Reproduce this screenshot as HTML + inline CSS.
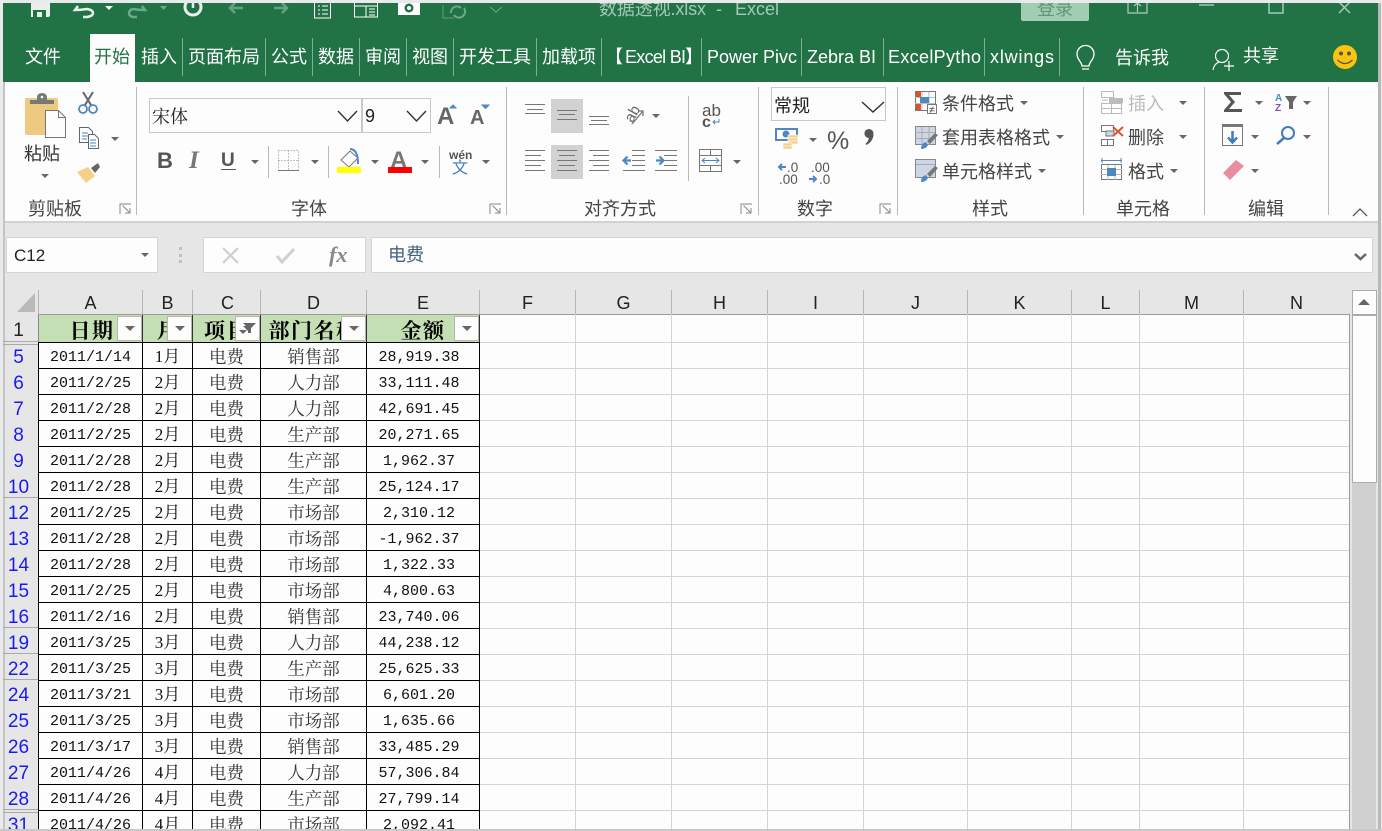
<!DOCTYPE html>
<html lang="zh"><head><meta charset="utf-8"><title>数据透视.xlsx - Excel</title>
<style>
html,body{margin:0;padding:0;width:1382px;height:831px;overflow:hidden;background:#e8eaec}
body{position:relative;font-family:"Liberation Sans","Noto Sans CJK SC",sans-serif}
.a{position:absolute}
#bg{left:3px;top:3px;width:1375px;height:826px;background:#e6e6e6;overflow:hidden}
#green{left:3px;top:3px;width:1375px;height:79px;background:#217346}
#ribbon{left:5px;top:82px;width:1373px;height:139px;background:#fdfdfd;border-bottom:2px solid #d2d2d2}
#cells{left:38px;top:315px;width:1311px;height:514px;background:#fdfdfd}
#lines{left:480px;top:342px;width:869px;height:487px;background-image:repeating-linear-gradient(to bottom,#d4d4d4 0,#d4d4d4 1px,transparent 1px,transparent 26px)}
.v{position:absolute;top:290px;width:1px;height:539px;background:#d4d4d4}
.hs{position:absolute;top:290px;width:1px;height:24px;background:#b4b4b4}
table{position:absolute;left:38px;top:342px;border-collapse:collapse;table-layout:fixed;width:442px;font-family:"Liberation Mono","Noto Serif CJK SC",serif;font-size:15px;color:#111}
td{border:1px solid #000;height:21px;padding:4px 0 0;text-align:center;line-height:21px;white-space:nowrap;overflow:hidden}
td.c{font-family:"Noto Serif CJK SC",serif;font-size:17.5px;color:#333;height:23px;line-height:23px;padding-top:2px}
td.m{font-family:"Liberation Serif","Noto Serif CJK SC",serif;font-size:17px;height:23px;line-height:23px;padding-top:2px}
td.e{padding-right:8px}
#hdr{left:38px;top:315px;width:442px;height:27px;background:#c4dfb3;overflow:hidden}
.hc{position:absolute;top:0;height:27px;text-align:center;font:bold 21px/32px "Liberation Serif","Noto Serif CJK SC",serif;letter-spacing:1.5px;color:#000;white-space:nowrap;overflow:hidden}
.fb{position:absolute;top:1px;width:23px;height:23px;background:#fdfdfd;border:1px solid #b5b5b5}
.fb:after{content:"";position:absolute;left:7px;top:9px;border:5px solid transparent;border-top:5px solid #666;border-bottom:0}
.ch{position:absolute;top:290px;height:24px;font-size:18px;line-height:27px;text-align:center;color:#222}
.rh{position:absolute;left:1px;width:35px;text-align:center;font-size:19px;height:26px;line-height:30px;color:#1a1af0}
.dl{position:absolute;left:3px;width:35px;height:1px;background:#aaa}
</style></head>
<body>
<div class="a" id="bg"></div>
<div class="a" id="green"></div>
<div class="a" id="ribbon"></div>
<div class="a" style="left:3px;top:82px;width:2px;height:747px;background:#c4c4c4"></div>
<div class="a" style="left:1378px;top:3px;width:3px;height:826px;background:#b8b8b8"></div>
<div class="a" style="left:3px;top:829px;width:1378px;height:2px;background:#c4c4c4"></div>

<!-- formula bar -->
<div class="a" style="left:6px;top:237px;width:150px;height:34px;background:#fdfdfd;border:1px solid #d4d4d4"></div>
<div class="a" style="left:203px;top:237px;width:161px;height:34px;background:#fdfdfd;border:1px solid #d4d4d4"></div>
<div class="a" style="left:371px;top:237px;width:1000px;height:34px;background:#fdfdfd;border:1px solid #d4d4d4"></div>

<!-- sheet -->
<div class="a" id="cells"></div>
<div class="a" id="lines"></div>
<div class="a" style="left:38px;top:314px;width:1312px;height:1px;background:#9b9b9b"></div>
<div class="a" style="left:1349px;top:314px;width:1px;height:515px;background:#9b9b9b"></div>
<i class="v" style="left:575px"></i><i class="v" style="left:671px"></i><i class="v" style="left:767px"></i><i class="v" style="left:863px"></i><i class="v" style="left:967px"></i><i class="v" style="left:1071px"></i><i class="v" style="left:1139px"></i><i class="v" style="left:1243px"></i>
<i class="hs" style="left:38px"></i><i class="hs" style="left:142px"></i><i class="hs" style="left:192px"></i><i class="hs" style="left:260px"></i><i class="hs" style="left:366px"></i><i class="hs" style="left:479px"></i><i class="hs" style="left:575px"></i><i class="hs" style="left:671px"></i><i class="hs" style="left:767px"></i><i class="hs" style="left:863px"></i><i class="hs" style="left:967px"></i><i class="hs" style="left:1071px"></i><i class="hs" style="left:1139px"></i><i class="hs" style="left:1243px"></i>
<div class="ch" style="left:39px;width:103px">A</div><div class="ch" style="left:143px;width:49px">B</div><div class="ch" style="left:194px;width:67px">C</div><div class="ch" style="left:261px;width:105px">D</div><div class="ch" style="left:367px;width:112px">E</div><div class="ch" style="left:480px;width:95px">F</div><div class="ch" style="left:576px;width:95px">G</div><div class="ch" style="left:672px;width:95px">H</div><div class="ch" style="left:768px;width:95px">I</div><div class="ch" style="left:864px;width:103px">J</div><div class="ch" style="left:968px;width:103px">K</div><div class="ch" style="left:1072px;width:67px">L</div><div class="ch" style="left:1140px;width:103px">M</div><div class="ch" style="left:1244px;width:105px">N</div>

<div class="a" id="hdr">
<div class="hc" style="left:2px;width:104px">日期</div>
<div class="hc" style="left:105px;width:49px">月</div>
<div class="hc" style="left:155px;width:67px">项目</div>
<div class="hc" style="left:223px;width:105px">部门名称</div>
<div class="hc" style="left:329px;width:112px">金额</div>
<div class="fb" style="left:79px"></div><div class="fb" style="left:129px"></div><div class="fb" style="left:197px"></div><div class="fb" style="left:303px"></div><div class="fb" style="left:416px"></div>
<svg class="a" style="left:201px;top:8px" width="18" height="12"><path d="M4 0h13l-5 5v5h-3v-5z" fill="#666"/><path d="M0 7h8l-4 4z" fill="#666"/></svg>
</div>
<div class="a" style="left:38px;top:315px;width:1px;height:27px;background:#888"></div>
<div class="a" style="left:142px;top:315px;width:1px;height:27px;background:#333"></div><div class="a" style="left:192px;top:315px;width:1px;height:27px;background:#333"></div><div class="a" style="left:260px;top:315px;width:1px;height:27px;background:#333"></div><div class="a" style="left:366px;top:315px;width:1px;height:27px;background:#333"></div><div class="a" style="left:479px;top:315px;width:1px;height:27px;background:#333"></div>

<table><colgroup><col style="width:104px"><col style="width:50px"><col style="width:68px"><col style="width:106px"><col style="width:113px"></colgroup>
<tr><td>2011/1/14</td><td class="m">1月</td><td class="c">电费</td><td class="c">销售部</td><td class="e">28,919.38</td></tr>
<tr><td>2011/2/25</td><td class="m">2月</td><td class="c">电费</td><td class="c">人力部</td><td class="e">33,111.48</td></tr>
<tr><td>2011/2/28</td><td class="m">2月</td><td class="c">电费</td><td class="c">人力部</td><td class="e">42,691.45</td></tr>
<tr><td>2011/2/25</td><td class="m">2月</td><td class="c">电费</td><td class="c">生产部</td><td class="e">20,271.65</td></tr>
<tr><td>2011/2/28</td><td class="m">2月</td><td class="c">电费</td><td class="c">生产部</td><td class="e">1,962.37</td></tr>
<tr><td>2011/2/28</td><td class="m">2月</td><td class="c">电费</td><td class="c">生产部</td><td class="e">25,124.17</td></tr>
<tr><td>2011/2/25</td><td class="m">2月</td><td class="c">电费</td><td class="c">市场部</td><td class="e">2,310.12</td></tr>
<tr><td>2011/2/28</td><td class="m">2月</td><td class="c">电费</td><td class="c">市场部</td><td class="e">-1,962.37</td></tr>
<tr><td>2011/2/28</td><td class="m">2月</td><td class="c">电费</td><td class="c">市场部</td><td class="e">1,322.33</td></tr>
<tr><td>2011/2/25</td><td class="m">2月</td><td class="c">电费</td><td class="c">市场部</td><td class="e">4,800.63</td></tr>
<tr><td>2011/2/16</td><td class="m">2月</td><td class="c">电费</td><td class="c">销售部</td><td class="e">23,740.06</td></tr>
<tr><td>2011/3/25</td><td class="m">3月</td><td class="c">电费</td><td class="c">人力部</td><td class="e">44,238.12</td></tr>
<tr><td>2011/3/25</td><td class="m">3月</td><td class="c">电费</td><td class="c">生产部</td><td class="e">25,625.33</td></tr>
<tr><td>2011/3/21</td><td class="m">3月</td><td class="c">电费</td><td class="c">市场部</td><td class="e">6,601.20</td></tr>
<tr><td>2011/3/25</td><td class="m">3月</td><td class="c">电费</td><td class="c">市场部</td><td class="e">1,635.66</td></tr>
<tr><td>2011/3/17</td><td class="m">3月</td><td class="c">电费</td><td class="c">销售部</td><td class="e">33,485.29</td></tr>
<tr><td>2011/4/26</td><td class="m">4月</td><td class="c">电费</td><td class="c">人力部</td><td class="e">57,306.84</td></tr>
<tr><td>2011/4/26</td><td class="m">4月</td><td class="c">电费</td><td class="c">生产部</td><td class="e">27,799.14</td></tr>
<tr><td>2011/4/26</td><td class="m">4月</td><td class="c">电费</td><td class="c">市场部</td><td class="e">2,092.41</td></tr>
</table>

<div class="a" style="left:0;top:829px;width:1382px;height:2px;background:#c8c8c8"></div>

<!-- row headers -->
<div class="rh" style="top:316px;color:#222">1</div>
<div class="rh" style="top:343px">5</div><div class="rh" style="top:369px">6</div><div class="rh" style="top:395px">7</div><div class="rh" style="top:421px">8</div><div class="rh" style="top:447px">9</div><div class="rh" style="top:473px">10</div><div class="rh" style="top:499px">12</div><div class="rh" style="top:525px">13</div><div class="rh" style="top:551px">14</div><div class="rh" style="top:577px">15</div><div class="rh" style="top:603px">16</div><div class="rh" style="top:629px">19</div><div class="rh" style="top:655px">22</div><div class="rh" style="top:681px">24</div><div class="rh" style="top:707px">25</div><div class="rh" style="top:733px">26</div><div class="rh" style="top:759px">27</div><div class="rh" style="top:785px">28</div><div class="rh" style="top:811px;height:18px;overflow:hidden">31</div>
<i class="dl" style="top:341px"></i><i class="dl" style="top:344px"></i><i class="dl" style="top:497px"></i><i class="dl" style="top:627px"></i><i class="dl" style="top:653px"></i><i class="dl" style="top:679px"></i><i class="dl" style="top:809px"></i><i class="dl" style="top:812px"></i>

<!-- scrollbar -->
<div class="a" style="left:1352px;top:315px;width:24px;height:514px;background:#cfd0cf"></div>
<div class="a" style="left:1352px;top:290px;width:23px;height:23px;background:#fdfdfd;border:1px solid #ababab"></div>
<div class="a" style="left:1352px;top:315px;width:23px;height:166px;background:#fdfdfd;border:1px solid #ababab"></div>
<svg class="a" style="left:1358px;top:298px" width="12" height="8"><path d="M0 7L6 1l6 6z" fill="#666"/></svg>

<!-- overlay: title bar, ribbon tabs, ribbon commands -->
<svg class="a" style="left:0;top:0" width="1382" height="316" viewBox="0 0 1382 316">
<defs><path id="d" d="M0 0h8l-4 4z" fill="#666"/><path id="dw" d="M0 0h8l-4 4z" fill="#fff"/></defs>
<style>
text{font-family:"Liberation Sans","Noto Sans CJK SC",sans-serif;font-size:18px}
.tb{fill:#fff}.r{fill:#444}
.l{stroke:#777;stroke-width:1;fill:none}
</style>
<!-- quick access (clipped at window top) -->
<clipPath id="top"><rect x="3" y="3" width="1375" height="40"/></clipPath>
<g clip-path="url(#top)">
<path d="M31 0h19v15q0 2-2 2h-2v-7h-13v7h-2z" fill="#e8f0ec"/><rect x="37" y="12" width="5" height="5" fill="#e8f0ec"/>
<path d="M78 6l-3 4q6 0 12-1 6 1 6 4t-6 4h-4" fill="none" stroke="#e8f0ec" stroke-width="2.500"/>
<use href="#dw" x="105" y="6"/>
<path d="M142 6l3 4q-6 0-12-1-4 1-4 4t4 4h4" fill="none" stroke="#6ea88a" stroke-width="2.500"/>
<path d="M160 6h7l-3.500 4z" fill="#6ea88a"/>
<circle cx="193" cy="7" r="8" fill="none" stroke="#e8f0ec" stroke-width="3"/><path d="M193 0v8" stroke="#e8f0ec" stroke-width="2.500"/>
<path d="M243 8h-13M235 3l-5 5 5 5" fill="none" stroke="#62a183" stroke-width="2.500"/>
<path d="M274 8h13M282 3l5 5-5 5" fill="none" stroke="#62a183" stroke-width="2.500"/>
<rect x="314.500" y="0" width="16" height="18" fill="none" stroke="#fff"/><path d="M318 6h2M322 6h6M318 10h2M322 10h6M318 14h2M322 14h6" stroke="#fff"/>
<rect x="354.500" y="0" width="23" height="17" fill="none" stroke="#fff"/><path d="M355 6h22M366 6v11M369 9h6M369 12h6M369 15h6" stroke="#fff"/>
<path d="M398 0h22v15h-22z" fill="#fff"/><circle cx="409" cy="8" r="4.500" fill="#217346"/><circle cx="409" cy="8" r="2" fill="#fff"/>
<path d="M443 5v13h11" fill="none" stroke="#5f9c7e"/><path d="M451 13a6 6 0 0 1 10-5M464 8a6 6 0 0 1-10 7" fill="none" stroke="#6ea88a" stroke-width="2"/>
<path d="M490 7l6 5 6-5" fill="none" stroke="#6ea88a"/>
<text x="599" y="15" fill="#a4c9b6" textLength="107">数据透视.xlsx</text><text x="716" y="15" fill="#a4c9b6">-</text><text x="735" y="15" fill="#a4c9b6">Excel</text>
<rect x="1021" y="0" width="68" height="21" rx="2" fill="#a1cdb3"/><text x="1037" y="15" fill="#5f9478">登录</text>
<path d="M1128 0v13h19v-13M1137.500 12v-9M1134 6l3.500-3 3.500 3" fill="none" stroke="#aecdbb" stroke-width="1.200"/>
<path d="M1199 5h15" stroke="#a4c9b6" stroke-width="1.500"/>
<rect x="1269" y="0" width="14" height="13" fill="none" stroke="#a4c9b6" stroke-width="1.500"/>
<path d="M1339 2l11 11M1350 2l-11 11" stroke="#a4c9b6" stroke-width="1.500"/>
</g>

<!-- tabs -->
<rect x="90" y="34" width="45" height="48" fill="#fdfdfd"/>
<g stroke="#7fb095"><path d="M182.500 38v38M265.500 38v38M312.500 38v38M359.500 38v38M406.500 38v38M453.500 38v38M536.500 38v38M601.500 38v38M701.500 38v38M801.500 38v38M883.500 38v38M984.500 38v38M1059.500 38v38"/></g>
<g class="tb">
<text x="25" y="63">文件</text><text x="141" y="63">插入</text><text x="188" y="63">页面布局</text><text x="271" y="63">公式</text><text x="318" y="63">数据</text><text x="365" y="63">审阅</text><text x="412" y="63">视图</text><text x="459" y="63">开发工具</text><text x="542" y="63">加载项</text>
<text x="605" y="63">【</text><text x="625" y="63" textLength="61">Excel BI</text><text x="685" y="63">】</text><text x="707" y="63">Power Pivc</text><text x="807" y="63">Zebra BI</text><text x="888" y="63" textLength="93">ExcelPytho</text><text x="990" y="63" textLength="64">xlwings</text>
<text x="1115" y="64">告诉我</text><text x="1243" y="62">共享</text>
</g>
<text x="94" y="63" fill="#217346">开始</text>
<!-- tell me bulb -->
<path d="M1082 66c0-4-5-6-5-12a8.500 8.500 0 0 1 17 0c0 6-5 8-5 12zM1082 69h7" fill="none" stroke="#fff" stroke-width="1.300"/>
<!-- share person -->
<circle cx="1222" cy="56" r="6.500" fill="none" stroke="#fff" stroke-width="1.200"/><path d="M1213 70q1-6 6-8M1224 66h10M1229 61v10" fill="none" stroke="#fff" stroke-width="1.200"/>
<!-- smiley -->
<circle cx="1345" cy="57" r="12" fill="#fcc30f"/><circle cx="1341" cy="53.500" r="2" fill="#555"/><circle cx="1349" cy="53.500" r="2" fill="#555"/><path d="M1337.500 60q7.500 7 15 0" fill="none" stroke="#555" stroke-width="1.300"/>

<!-- group separators -->
<g stroke="#b9b9b9"><path d="M136.500 87v128M506.500 87v128M758.500 87v128M897.500 87v128M1083.500 87v128M1204.500 87v128M1328.500 87v128M268.500 146v32M328.500 146v32M439.500 146v32M688.500 96v85"/></g>

<!-- group labels -->
<g class="r">
<text x="28" y="215">剪贴板</text><text x="291" y="215">字体</text><text x="584" y="215">对齐方式</text><text x="797" y="215">数字</text><text x="972" y="215">样式</text><text x="1116" y="215">单元格</text><text x="1248" y="215">编辑</text>
<text x="24" y="160" fill="#333">粘贴</text>
<text x="942" y="110">条件格式</text><text x="942" y="144">套用表格格式</text><text x="942" y="178">单元格样式</text>
<text x="1128" y="110" fill="#bbb" style="fill:#bbb">插入</text><text x="1128" y="144">删除</text><text x="1128" y="178">格式</text>
</g>
<!-- launchers -->
<g fill="none" stroke="#888"><path d="M131 204h-11v10M122.500 205.500l7 7M130 208v5h-5"/><path d="M501 204h-11v10M492.500 205.500l7 7M500 208v5h-5"/><path d="M752 204h-11v10M743.500 205.500l7 7M751 208v5h-5"/><path d="M891 204h-11v10M882.500 205.500l7 7M890 208v5h-5"/></g>
<path d="M1353 216l7-7 7 7" fill="none" stroke="#555" stroke-width="1.300"/>

<!-- dropdown triangles -->
<use href="#d" x="41" y="174"/><use href="#d" x="111" y="137"/><use href="#d" x="251" y="160"/><use href="#d" x="311" y="160"/><use href="#d" x="371" y="160"/><use href="#d" x="421" y="160"/><use href="#d" x="482" y="160"/><use href="#d" x="652" y="114"/><use href="#d" x="733" y="160"/><use href="#d" x="809" y="138"/><use href="#d" x="1020" y="101"/><use href="#d" x="1056" y="135"/><use href="#d" x="1038" y="169"/><use href="#d" x="1179" y="101"/><use href="#d" x="1179" y="135"/><use href="#d" x="1170" y="169"/><use href="#d" x="1255" y="101"/><use href="#d" x="1303" y="101"/><use href="#d" x="1251" y="135"/><use href="#d" x="1303" y="135"/><use href="#d" x="1251" y="169"/><use href="#d" x="141" y="253"/>

<!-- clipboard -->
<rect x="25" y="98" width="33" height="37" rx="2" fill="#eec980"/>
<path d="M30 104v-4h7v-2q0-5 5-5t5 5v2h7v4z" fill="#777"/><circle cx="42" cy="97" r="1.300" fill="#fff"/>
<path d="M45.500 110.500h13l7 7v20h-20z" fill="#fdfdfd" stroke="#777"/><path d="M58.500 110.500v7h7" fill="none" stroke="#777"/>
<circle cx="83" cy="109" r="4" fill="none" stroke="#4d88c4" stroke-width="1.800"/><circle cx="93" cy="109" r="4" fill="none" stroke="#4d88c4" stroke-width="1.800"/>
<path d="M85 105l8-13M91 105l-8-13" stroke="#666" stroke-width="2"/>
<path d="M79.500 127.500h9l4 4v11h-13z" fill="#fdfdfd" stroke="#666"/><path d="M88.500 134.500h6l4 4v10h-10z" fill="#fdfdfd" stroke="#666"/>
<path d="M82 133h6M82 136h6M82 139h5M90 140h6M90 143h6M90 146h6" stroke="#4d88c4"/>
<path d="M77 172l11-5 7 9-9 7q-5-6-9-11z" fill="#f6d08a"/><path d="M91 168l7-5 2 4-5 6z" fill="#666"/>

<!-- font boxes -->
<rect x="149.500" y="98.500" width="212" height="34" fill="#fdfdfd" stroke="#c8c8c8"/><rect x="362.500" y="98.500" width="68" height="34" fill="#fdfdfd" stroke="#c8c8c8"/>
<text x="152" y="123" fill="#222" style='font-family:"Noto Serif CJK SC",serif'>宋体</text><text x="365" y="122" fill="#222">9</text>
<path d="M338 111l9.500 10 9.500-10M407 111l9.500 10 9.500-10" fill="none" stroke="#333" stroke-width="1.400"/>
<text x="437" y="124" fill="#666" style="font-size:24px;font-weight:bold">A</text><path d="M450 108l3-3 3 3z" fill="#4d88c4" stroke="#4d88c4"/>
<text x="470" y="124" fill="#666" style="font-size:20px;font-weight:bold">A</text><path d="M482 105h7l-3.500 3.500z" fill="#4d88c4" stroke="#4d88c4"/>
<!-- BIU -->
<text x="157" y="168" fill="#555" style="font-size:22px;font-weight:bold">B</text>
<text x="189" y="168" fill="#777" style='font-family:"Liberation Serif",serif;font-size:25px;font-style:italic;font-weight:bold'>I</text>
<text x="221" y="166" fill="#555" style="font-size:19px;font-weight:bold">U</text><path d="M221 169.500h15" stroke="#555"/>
<!-- borders -->
<path d="M278.500 150.500h20v20h-20zM278.500 160.500h20M288.500 150.500v20" fill="none" stroke="#888" stroke-dasharray="1 2"/><path d="M278 170.500h21" stroke="#777"/>
<!-- fill -->
<path d="M350 151l-9 9 8 7 9-9z" fill="#fdfdfd" stroke="#777"/><path d="M350 149q8 0 8 15" fill="none" stroke="#4d88c4" stroke-width="2"/><rect x="337" y="167" width="24" height="6" fill="#ff0"/>
<text x="390" y="168" fill="#777" style="font-size:24px;font-weight:bold">A</text><rect x="388" y="167" width="24" height="6" fill="#f00"/>
<text x="449" y="159" fill="#555" style="font-size:12px;font-weight:bold">wén</text><text x="452" y="173" fill="#3d7cbd" style="font-size:16px">文</text>

<!-- alignment -->
<rect x="551" y="99" width="32" height="34" fill="#d2d2d2"/><rect x="551" y="145" width="32" height="34" fill="#d2d2d2"/>
<g class="l" stroke="#777"><path d="M525 104.500h20M527 109.500h16M525 113.500h20"/><path d="M557 110.500h20M559 114.500h16M557 119.500h20"/><path d="M589 116.500h20M591 120.500h16M589 124.500h20"/>
<path d="M525 150.500h20M525 155.500h16M525 160.500h20M525 165.500h16M525 170.500h20"/><path d="M557 150.500h20M559 155.500h16M557 160.500h20M559 165.500h16M557 170.500h20"/><path d="M589 150.500h20M593 155.500h16M589 160.500h20M593 165.500h16M589 170.500h20"/>
<path d="M632 150.500h13M632 155.500h13M632 160.500h13M632 165.500h13M623 170.500h22"/><path d="M655 150.500h22M664 155.500h13M664 160.500h13M664 165.500h13M655 170.500h22"/></g>
<path d="M631 160.500h-7M627.500 156.500l-4 4 4 4" fill="none" stroke="#4d88c4" stroke-width="2.200"/><path d="M656 160.500h7M659.500 156.500l4 4-4 4" fill="none" stroke="#4d88c4" stroke-width="2.200"/>
<text x="624" y="119" fill="#666" style="font-size:15px" transform="rotate(-60 632 114)">ab</text><path d="M632 124l11-13M638 111h5v5" fill="none" stroke="#777" stroke-width="1.300"/>
<text x="702" y="116" fill="#555" style="font-size:17px">ab</text><text x="702" y="127" fill="#555" style="font-size:16px;font-weight:bold">c</text><path d="M719 119v3h-6M715 120l-2 2 2 2" fill="none" stroke="#4d88c4"/>
<path d="M699.500 149.500h22v22h-22zM699.500 155.500h22M699.500 165.500h22M710.500 149.500v6M710.500 165.500v6" fill="none" stroke="#777"/><path d="M702 160.500h17M705 158l-3 2.500 3 2.500M716 158l3 2.500-3 2.500" fill="none" stroke="#4d88c4"/>

<!-- number -->
<rect x="771.500" y="87.500" width="114" height="33" fill="#fdfdfd" stroke="#c8c8c8"/>
<text x="774" y="112" fill="#222">常规</text><path d="M862 102l11 10 11-10" fill="none" stroke="#333" stroke-width="1.400"/>
<path d="M775 128h23v13h-23z" fill="#4d88c4"/><rect x="777" y="130" width="19" height="9" fill="#fff"/><circle cx="786" cy="134" r="3.500" fill="#4d88c4"/>
<g fill="#f6d08a" stroke="#fdfdfd" stroke-width=".6"><rect x="788" y="135" width="10" height="3"/><rect x="788" y="138" width="10" height="3"/><rect x="788" y="141" width="10" height="3"/><rect x="783" y="143" width="9" height="3"/><rect x="783" y="146" width="9" height="3"/></g>
<text x="827" y="149" fill="#555" style="font-size:25px">%</text>
<path d="M869 129a4.500 4.500 0 0 1 4.500 5c0 5-3 9-7 11l-1-1.200c2-1.500 3-3.500 3.300-5.800a4.500 4.500 0 0 1 .2-9z" fill="#555"/>
<text x="787" y="172" fill="#555" style="font-size:13.500px">.0</text><text x="779" y="184" fill="#555" style="font-size:13.500px">.00</text><text x="811" y="172" fill="#555" style="font-size:13.500px">.00</text><text x="819" y="184" fill="#555" style="font-size:13.500px">.0</text>
<path d="M786 167h-7M782 164l-3 3 3 3M809 179h7M813 176l3 3-3 3" fill="none" stroke="#4d88c4" stroke-width="2"/>

<!-- styles icons -->
<g><rect x="915.500" y="91.500" width="20" height="19" fill="#fdfdfd" stroke="#777"/><path d="M915 97.500h20M915 103.500h20M922 92v18M929 92v18" stroke="#bbb"/><rect x="920" y="97" width="9" height="6" fill="#4d88c4"/><rect x="916" y="92" width="5" height="5" fill="#d9552c"/><rect x="916" y="104" width="5" height="6" fill="#d9552c"/><rect x="927.500" y="104.500" width="9" height="9" fill="#fdfdfd" stroke="#777"/><text x="929" y="113" fill="#444" style="font-size:10px">≠</text></g>
<g><rect x="915.500" y="126.500" width="20" height="18" fill="#cdd5e8" stroke="#888"/><path d="M915 132.500h20M915 138.500h20M922 127v18M929 127v18" stroke="#aaa"/><path d="M921 149q0-6 5-7l2 3q-2 4-7 4z" fill="#4d88c4"/><path d="M927 141l8-8 3 2-8 9z" fill="#777"/></g>
<g><rect x="915.500" y="159.500" width="20" height="18" fill="#cdd5e8" stroke="#888"/><path d="M916 164.500h19" stroke="#aaa"/><path d="M921 182q0-6 5-7l2 3q-2 4-7 4z" fill="#4d88c4"/><path d="M927 174l8-8 3 2-8 9z" fill="#777"/></g>
<!-- cells icons -->
<g fill="none" stroke="#bbb"><path d="M1101.500 91.500h12v6h-12zM1101.500 103.500h20v10h-20zM1101.500 108.500h20M1111.500 103.500v10"/></g><rect x="1109" y="98" width="14" height="5" fill="#bbb"/><path d="M1102 100h6" stroke="#bbb"/>
<g fill="none" stroke="#777"><path d="M1101.500 125.500h12v6h-12zM1101.500 139.500h12v6h-12zM1101.500 145.500v-6M1107.500 139.500v6"/></g><rect x="1106" y="131" width="8" height="5" fill="#cdd5e8" stroke="#777"/><path d="M1113 127l10 9M1123 127l-10 9" stroke="#d9552c" stroke-width="2"/>
<path d="M1101 160.500h21M1102 158v5M1121 158v5" stroke="#4d88c4"/><rect x="1101.500" y="164.500" width="20" height="15" fill="#fdfdfd" stroke="#777"/><path d="M1101 169.500h21M1101 174.500h21M1108 165v15M1115 165v15" stroke="#bbb"/><rect x="1107" y="168" width="9" height="8" fill="#4d88c4"/>
<!-- editing icons -->
<path d="M1224 92h17v3h-12l6 7-6 7h13v3h-18v-2l7-8-7-8z" fill="#555"/>
<text x="1275" y="101" fill="#4d88c4" style="font-size:10px;font-weight:bold">A</text><text x="1275" y="111" fill="#7a4fb5" style="font-size:10px;font-weight:bold">Z</text><path d="M1285 96h12l-4 6v7h-4v-7z" fill="#666"/>
<rect x="1222.500" y="124.500" width="20" height="21" fill="#fdfdfd" stroke="#777"/><rect x="1222" y="124" width="21" height="3" fill="#777"/><path d="M1232.500 131v11M1228 137.500l4.500 5 4.500-5" fill="none" stroke="#3d7cbd" stroke-width="2.500"/>
<circle cx="1288" cy="133" r="6" fill="none" stroke="#3d7cbd" stroke-width="2"/><path d="M1284 138l-7 6" stroke="#3d7cbd" stroke-width="2.500"/>
<path d="M1223 173l13-13 8 6-14 14z" fill="#e88ea0"/>

<!-- formula bar content -->
<text x="14" y="261" fill="#222" style="font-size:17px">C12</text>
<g fill="#c0c0c0"><rect x="179" y="247" width="3" height="3"/><rect x="179" y="254" width="3" height="3"/><rect x="179" y="260" width="3" height="3"/></g>
<path d="M223 248l15 15M238 248l-15 15" stroke="#d0d0d0" stroke-width="2.200"/>
<path d="M277 256l5 6 12-13" fill="none" stroke="#d0d0d0" stroke-width="3"/>
<text x="329" y="262" fill="#888" style='font-family:"Liberation Serif",serif;font-size:22px;font-style:italic;font-weight:bold'>fx</text>
<text x="388" y="261" fill="#44607f">电费</text>
<path d="M1355 254l5.500 5 5.500-5" fill="none" stroke="#666" stroke-width="2.500"/>
<!-- corner -->
<path d="M17 312l18-19v19z" fill="#b9b9b9"/>
</svg>
</body></html>
